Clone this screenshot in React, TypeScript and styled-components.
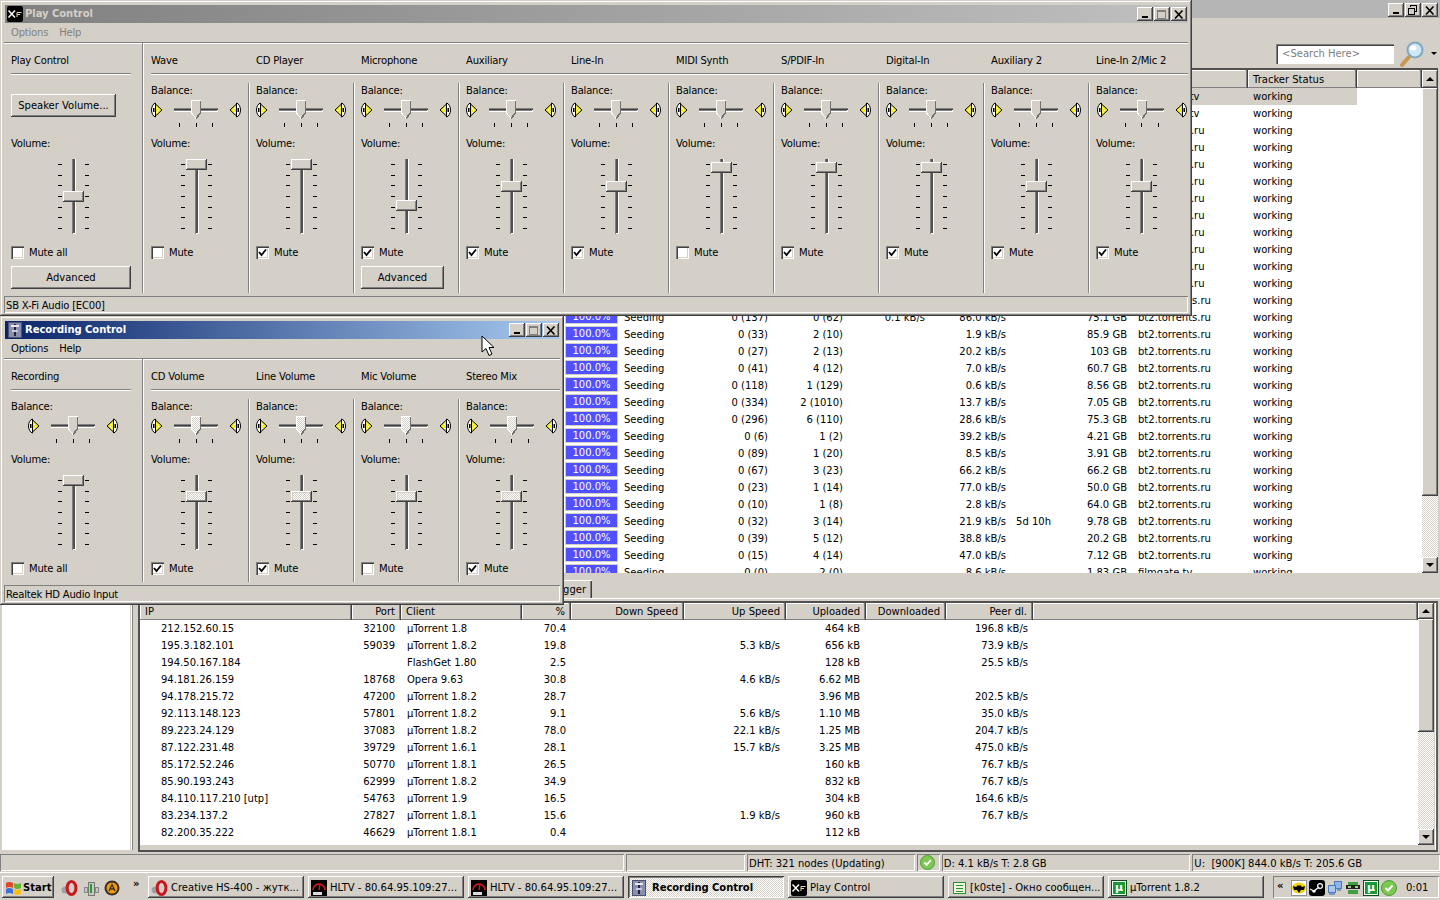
import React from "react";
import styled, { createGlobalStyle, css } from "styled-components";

const face = "#d4d0c8";

const GlobalStyle = createGlobalStyle`
  html, body {
    margin: 0;
    width: 1440px;
    height: 900px;
    overflow: hidden;
    background: ${face};
    color: #000;
    font-family: "DejaVu Sans", "Noto Sans", sans-serif;
    font-size: 10px;
    line-height: 14px;
  }
  * { box-sizing: border-box; }
`;

const raised = css`
  box-shadow: inset -1px -1px #404040, inset 1px 1px #fff, inset -2px -2px #808080;
`;
const sunken = css`
  box-shadow: inset 1px 1px #808080, inset -1px -1px #fff;
`;
const dither = css`
  background-color: ${face};
  background-image: repeating-conic-gradient(#fff 0 25%, ${face} 0 50%);
  background-size: 2px 2px;
`;

const Page = styled.div`
  width: 1440px;
  height: 900px;
  display: flex;
  flex-direction: column;
  overflow: hidden;
`;

const Desktop = styled.div`
  position: relative;
  height: 872px;
`;

/* uTorrent window behind the mixers */
const AppWindow = styled.div`
  height: 872px;
  display: flex;
  flex-direction: column;
`;

const AppTitle = styled.div`
  height: 18px;
  background: #b5b5b5;
  display: flex;
  justify-content: flex-end;
  padding: 3px 2px 0 0;
  gap: 1px;
`;

const Toolbar = styled.div`
  height: 50px;
  display: flex;
  align-items: flex-start;
  justify-content: flex-end;
  padding: 26px 3px 0 0;
`;

const SearchBox = styled.div`
  width: 118px;
  height: 20px;
  background: #fff;
  color: #808080;
  padding: 3px 6px;
  margin-right: 0;
  box-shadow: inset 1px 1px #808080, inset 2px 2px #404040, inset -1px -1px #fff;
`;

const SearchIcon = styled.svg`
  margin: -3px 0 0 5px;
`;

const DropArrow = styled.div`
  height: 0;
  margin: 8px 0 0 6px;
  border: 3px solid transparent;
  border-top: 3px solid #000;
  border-bottom: 0;
  width: 6px;
`;

const TorrentFrame = styled.div`
  height: 505px;
  margin: 0 2px;
  border-top: 2px solid #505050;
  display: flex;
`;

const ListMain = styled.div`
  flex: 1;
  min-width: 0;
  background: #fff;
  overflow: hidden;
`;

const torrentColumns = "562px 56px 80px 72px 75px 82px 81px 45px 76px 117px 109px";
const peerColumns = "212px 49px 121px 49px 113px 102px 80px 80px 87px";

const HeaderRow = styled.div<{ $columns: string; $height: number; $lineHeight: number }>`
  display: grid;
  grid-template-columns: ${(p) => p.$columns} 1fr;
  height: ${(p) => p.$height}px;
  line-height: ${(p) => p.$lineHeight}px;
  background: ${face};
`;

const HeaderCell = styled.div<{ $right?: boolean }>`
  padding: 0 5px;
  text-align: ${(p) => (p.$right ? "right" : "left")};
  box-shadow: inset -1px -1px #808080, inset -2px 0 ${face}, inset 1px 1px #fff;
  border-right: 1px solid #404040;
  white-space: nowrap;
  overflow: hidden;
`;

const TableRow = styled.div<{ $columns: string; $selected?: boolean }>`
  display: grid;
  grid-template-columns: ${(p) => p.$columns};
  width: max-content;
  height: 17px;
  line-height: 17px;
  background: ${(p) => (p.$selected ? face : "transparent")};
`;

const Cell = styled.div<{ $right?: boolean; $pad?: number }>`
  text-align: ${(p) => (p.$right ? "right" : "left")};
  padding: ${(p) => (p.$right ? `0 ${p.$pad ?? 4}px 0 0` : `0 0 0 ${p.$pad ?? 4}px`)};
  white-space: nowrap;
  overflow: hidden;
`;

const ProgressOuter = styled.div`
  width: 53px;
  height: 15px;
  margin-left: 1px;
  border: 1px solid ${face};
  background: #5050ff;
  color: #fff;
  line-height: 13px;
  text-align: center;
`;

const ScrollColumn = styled.div<{ $height?: number }>`
  width: 16px;
  display: flex;
  flex-direction: column;
  ${(p) => (p.$height ? `height: ${p.$height}px;` : "")}
  ${dither}
`;

const ScrollButton = styled.div<{ $height: number }>`
  height: ${(p) => p.$height}px;
  background: ${face};
  ${raised}
  display: flex;
  align-items: center;
  justify-content: center;
  flex: none;
`;

const ScrollThumb = styled.div<{ $height: number }>`
  height: ${(p) => p.$height}px;
  background: ${face};
  ${raised}
  flex: none;
`;

const ScrollGap = styled.div`
  flex: 1;
`;

const ArrowGlyph = styled.div<{ $up?: boolean }>`
  width: 0;
  height: 0;
  border-left: 4px solid transparent;
  border-right: 4px solid transparent;
  ${(p) => (p.$up ? "border-bottom: 4px solid #000;" : "border-top: 4px solid #000;")}
`;

const TabStrip = styled.div`
  height: 25px;
  width: 592px;
  padding-top: 7px;
  display: flex;
  justify-content: flex-end;
`;

const Tab = styled.div`
  height: 18px;
  padding: 3px 6px 0 6px;
  background: ${face};
  box-shadow: inset 1px 1px #fff, inset -1px 0 #404040, inset -2px 0 #808080;
`;

const LowerArea = styled.div`
  height: 255px;
  display: flex;
  border-top: 1px solid #fff;
`;

const SideList = styled.div`
  width: 128px;
  height: 251px;
  margin-left: 2px;
  background: #fff;
  box-shadow: 1px 0 ${face}, 2px 0 #fff, 3px 0 #808080;
`;

const PeerFrame = styled.div`
  width: 1300px;
  height: 251px;
  margin-left: 8px;
  margin-top: 2px;
  border: 2px solid #505050;
  border-right-color: #606060;
  display: flex;
  padding-right: 2px;
  background: ${face};
  box-shadow: inset -1px 0 #fff;
`;

const PeerMain = styled(ListMain)`
  height: 242px;
`;

const StatusBar = styled.div`
  height: 19px;
  padding-top: 1px;
  display: flex;
  gap: 2px;
`;

const StatusPanel = styled.div<{ $width: number }>`
  width: ${(p) => p.$width}px;
  height: 17px;
  padding: 3px 0 0 2px;
  white-space: pre;
  display: flex;
  justify-content: flex-start;
  ${sunken}
`;

const StatusIconPanel = styled(StatusPanel)`
  padding: 1px 0 0 3px;
`;

/* mixer windows */
const MixerShell = styled.div<{ $top: number; $width: number; $height: number; $z: number }>`
  position: absolute;
  left: 0;
  top: ${(p) => p.$top}px;
  z-index: ${(p) => p.$z};
  width: ${(p) => p.$width}px;
  height: ${(p) => p.$height}px;
  padding: 5px 4px 3px 4px;
  background: ${face};
  display: flex;
  flex-direction: column;
  letter-spacing: -0.2px;
  box-shadow: inset -1px -1px #404040, inset 1px 1px ${face}, inset -2px -2px #808080, inset 2px 2px #fff;
`;

const TitleBar = styled.div<{ $active: boolean }>`
  height: 18px;
  flex: none;
  margin-left: 1px;
  display: flex;
  align-items: center;
  padding: 0 1px 0 2px;
  color: ${(p) => (p.$active ? "#fff" : face)};
  font-weight: bold;
  letter-spacing: -0.05px;
  background: ${(p) =>
    p.$active
      ? "linear-gradient(90deg, #0a246a, #a6caf0)"
      : "linear-gradient(90deg, #808080, #c0c0c0)"};
`;

const TitleText = styled.span`
  margin-left: 2px;
  flex: 1;
`;

const CaptionButtons = styled.div`
  display: flex;
  gap: 1px;
`;

const CaptionButton = styled.div`
  width: 16px;
  height: 14px;
  background: ${face};
  display: flex;
  align-items: center;
  justify-content: center;
  ${raised}
`;

const MenuBar = styled.div`
  height: 19px;
  flex: none;
  display: flex;
  gap: 11px;
  padding: 3px 0 0 7px;
`;

const MenuItem = styled.span<{ $disabled: boolean }>`
  color: ${(p) => (p.$disabled ? "#808080" : "#000")};
`;

const MixerClient = styled.div`
  flex: 1;
  min-height: 0;
  display: flex;
  border-top: 1px solid #808080;
  box-shadow: inset 0 1px #fff;
`;

const Strip = styled.div<{ $master?: boolean }>`
  width: ${(p) => (p.$master ? 139 : 105)}px;
  flex: none;
  display: flex;
  flex-direction: column;
  ${(p) =>
    p.$master
      ? `border-right: 1px solid #808080; box-shadow: 1px 0 #fff; margin-right: 1px;`
      : ""}
  &:last-child { width: auto; flex: 1; min-width: 0; }
`;

const StripName = styled.div<{ $inset: string }>`
  height: 31px;
  flex: none;
  padding-top: 11px;
  margin: ${(p) => p.$inset};
  padding-left: ${(p) => (p.$inset === "0" ? "7px" : "0")};
  border-bottom: 1px solid #808080;
  box-shadow: 0 1px #fff;
  white-space: nowrap;
`;

const StripBody = styled.div<{ $divider: boolean }>`
  flex: 1;
  width: ${(p) => (p.$divider ? "100%" : "105px")};
  margin-top: 9px;
  display: flex;
  flex-direction: column;
  ${(p) => (p.$divider ? `border-right: 1px solid #808080; box-shadow: 1px 0 #fff;` : "")}
`;

const MasterBody = styled(StripBody)`
  width: 100%;
`;

const StripLabel = styled.div`
  height: 14px;
  line-height: 16px;
  padding-left: 7px;
`;

const VolumeLabel = styled(StripLabel)`
  margin-top: 14px;
`;

const BalanceSlot = styled.div`
  height: 39px;
  flex: none;
`;

const BalanceRow = styled.div`
  height: 28px;
  margin-top: 2px;
  display: flex;
  justify-content: center;
  gap: 11px;
`;

const Speaker = styled.svg<{ $flip?: boolean }>`
  margin-top: 3px;
  flex: none;
  ${(p) => (p.$flip ? "transform: scaleX(-1);" : "")}
`;

const BalanceTrack = styled.div`
  position: relative;
  width: 44px;
  height: 28px;
  &::before {
    content: "";
    position: absolute;
    left: 0;
    right: 0;
    top: 9px;
    height: 4px;
    background: #808080;
    box-shadow: inset 0 1px #808080, inset 0 2px #404040, inset 0 -1px #fff, inset -1px 0 #fff;
  }
`;

const BalanceThumb = styled.svg`
  position: absolute;
  left: 17px;
  top: 1px;
`;

const BalanceTicks = styled.div`
  position: absolute;
  left: 5px;
  right: 5px;
  bottom: 0;
  display: flex;
  justify-content: space-between;
`;

const BalanceTick = styled.i`
  display: block;
  width: 1px;
  height: 4px;
  background: #000;
`;

const VolumeRow = styled.div`
  height: 75px;
  margin-top: 9px;
  flex: none;
  display: flex;
  justify-content: center;
`;

const TickColumn = styled.div`
  width: 4px;
  padding: 5px 0;
  display: flex;
  flex-direction: column;
  justify-content: space-between;
  align-items: center;
`;

const VolumeTick = styled.i`
  display: block;
  width: 4px;
  height: 1px;
  background: #000;
`;

const VolumeTrack = styled.div`
  position: relative;
  width: 21px;
  margin: 0 1px;
  &::before {
    content: "";
    position: absolute;
    left: 9px;
    top: 0;
    bottom: 0;
    width: 4px;
    background: #505050;
    box-shadow: inset 1px 0 #808080, inset -1px 0 #fff, inset 0 -1px #fff;
  }
`;

const VolumeThumb = styled.div<{ $dither: boolean; $top: number }>`
  position: absolute;
  left: 0;
  top: ${(p) => p.$top}px;
  width: 21px;
  height: 11px;
  background: ${face};
  ${(p) => (p.$dither ? dither : "")}
  box-shadow: inset -1px -1px #404040, inset 1px 1px #fff, inset -2px -2px #808080, inset 2px 2px ${face};
`;

const MuteRow = styled.label`
  height: 13px;
  margin: 12px 0 0 7px;
  flex: none;
  display: flex;
  align-items: center;
  gap: 5px;
`;

const CheckBox = styled.div`
  width: 13px;
  height: 13px;
  background: #fff;
  box-shadow: inset 1px 1px #808080, inset 2px 2px #404040, inset -1px -1px #fff, inset -2px -2px ${face};
  display: flex;
  align-items: center;
  justify-content: center;
`;

const PushButton = styled.button<{ $width: number; $height: number; $top: number }>`
  width: ${(p) => p.$width}px;
  height: ${(p) => p.$height}px;
  margin: ${(p) => p.$top}px 0 0 7px;
  padding: 0;
  border: 0;
  background: ${face};
  font: inherit;
  color: #000;
  ${raised}
`;

const MixerStatus = styled.div`
  height: 17px;
  margin-top: 3px;
  flex: none;
  padding: 3px 0 0 2px;
  ${sunken}
`;

const Cursor = styled.svg`
  position: absolute;
  left: 481px;
  top: 335px;
  z-index: 5;
`;

/* taskbar */
const Taskbar = styled.div`
  height: 28px;
  padding: 4px 2px 0 2px;
  display: flex;
  box-shadow: inset 0 1px #fff;
`;

const StartButton = styled.div`
  width: 52px;
  height: 22px;
  flex: none;
  font-weight: bold;
  display: flex;
  align-items: center;
  gap: 1px;
  padding: 1px 0 0 3px;
  ${raised}
`;

const QuickLaunch = styled.div`
  width: 94px;
  flex: none;
  display: flex;
  align-items: center;
  gap: 5px;
  padding-left: 7px;
`;

const Chevron = styled.span`
  font-weight: bold;
  line-height: 10px;
  margin: -8px 0 0 8px;
`;

const TaskButtons = styled.div`
  display: flex;
  gap: 4px;
`;

const TaskButton = styled.div<{ $active?: boolean }>`
  width: 156px;
  height: 22px;
  display: flex;
  align-items: center;
  gap: ${(p) => (p.$active ? 5 : 3)}px;
  padding: 1px 0 0 3px;
  white-space: nowrap;
  overflow: hidden;
  ${(p) =>
    p.$active
      ? css`
          ${dither}
          font-weight: bold;
          letter-spacing: -0.05px;
          box-shadow: inset 1px 1px #404040, inset -1px -1px #fff, inset 2px 2px #808080;
        `
      : raised}
`;

const Tray = styled.div`
  width: 166px;
  height: 22px;
  margin-left: 9px;
  flex: none;
  display: flex;
  align-items: center;
  gap: 2px;
  padding: 1px 0 0 4px;
  ${sunken}
`;

const TrayChevron = styled.span`
  width: 12px;
  font-weight: bold;
  line-height: 10px;
  margin-top: -3px;
`;

const Clock = styled.span`
  margin-left: 7px;
`;

const TaskIcon = styled.svg`
  flex: none;
`;

/* icons */
const MinGlyph = () => (
  <svg width="8" height="8" shapeRendering="crispEdges">
    <rect x="1" y="6" width="6" height="2" fill="#000" />
  </svg>
);

const MaxGlyph = ({ disabled }: { disabled?: boolean }) => (
  <svg width="10" height="9" shapeRendering="crispEdges">
    <path d="M0.5 1.5H8.5V8.5H0.5ZM0 0.5H9" fill="none" stroke={disabled ? "#808080" : "#000"} />
  </svg>
);

const RestoreGlyph = () => (
  <svg width="10" height="10" shapeRendering="crispEdges">
    <path d="M2.5 2V0.5H8.5V6.5H7M0.5 3.5H6.5V9.5H0.5Z" fill="none" stroke="#000" />
  </svg>
);

const CloseGlyph = () => (
  <svg width="10" height="9">
    <path d="M1 0.5L8.5 8.5M8.5 0.5L1 8.5" stroke="#000" strokeWidth="1.6" />
  </svg>
);

const XFiIcon = () => (
  <TaskIcon width="16" height="16">
    <rect width="16" height="16" rx="2" fill="#000" />
    <path d="M1.5 4.5L8 11.5M8 4.5L1.5 11.5" stroke="#fff" strokeWidth="1.4" />
    <path d="M10 11V6.5H14.5M10 8.5H13" stroke="#ddd8b0" strokeWidth="1" fill="none" />
  </TaskIcon>
);

const MixerIcon = () => (
  <TaskIcon width="16" height="16" shapeRendering="crispEdges">
    <rect x="1.5" y="0.5" width="13" height="15" fill="#8a8fb0" stroke="#4a5070" />
    <rect x="7" y="2" width="2" height="12" fill="#223" />
    <rect x="4" y="3" width="8" height="2" fill="#e8e8f0" />
    <rect x="5" y="8" width="6" height="2" fill="#c8cce0" />
  </TaskIcon>
);

const OperaIcon = () => (
  <TaskIcon width="17" height="16">
    <ellipse cx="4.5" cy="10" rx="4" ry="3.5" fill="#a0a0a0" />
    <ellipse cx="10.5" cy="8" rx="4.4" ry="6.4" fill="none" stroke="#c8171d" strokeWidth="3" />
  </TaskIcon>
);

const HltvIcon = () => (
  <TaskIcon width="16" height="16">
    <rect width="16" height="16" fill="#000" />
    <path d="M2 10A6 6 0 0 1 14 10" stroke="#e01818" strokeWidth="1.6" fill="none" />
    <path d="M8 10L9 4" stroke="#e01818" strokeWidth="1.4" />
    <rect x="2" y="12" width="9" height="3" fill="#ddd" />
  </TaskIcon>
);

const ChatIcon = () => (
  <TaskIcon width="16" height="16" shapeRendering="crispEdges">
    <rect x="2.5" y="2.5" width="12" height="11" fill="#e8f8d8" stroke="#2a9030" />
    <path d="M5 5.5H12M5 8H12M5 11H12" stroke="#2a9030" />
  </TaskIcon>
);

const UTorrentBadge = styled.span`
  width: 16px;
  height: 16px;
  flex: none;
  background: #169a36;
  border: 1px solid #0a4f1c;
  box-shadow: inset 0 0 0 1px #fff;
  color: #fff;
  font-weight: bold;
  font-size: 11px;
  line-height: 13px;
  text-align: center;
`;

const WindowsFlag = () => (
  <TaskIcon width="17" height="16">
    <path d="M1 3Q4 1 8 3V8Q4 6 1 8Z" fill="#e2452a" />
    <path d="M9 3Q12 5 16 3V8Q12 10 9 8Z" fill="#63b531" />
    <path d="M1 9Q4 7 8 9V14Q4 12 1 14Z" fill="#3f6fd8" />
    <path d="M9 9Q12 11 16 9V14Q12 16 9 14Z" fill="#f5c01e" />
  </TaskIcon>
);

const BatteryIcon = () => (
  <TaskIcon width="16" height="16" shapeRendering="crispEdges">
    <rect x="5" y="2" width="6" height="13" fill="#c8c8c0" stroke="#777" />
    <rect x="7" y="4" width="2" height="9" fill="#20a030" />
    <rect x="1" y="7" width="3" height="5" fill="#c8c8c0" stroke="#888" />
    <rect x="12" y="7" width="3" height="5" fill="#c8c8c0" stroke="#888" />
  </TaskIcon>
);

const AimpIcon = () => (
  <TaskIcon width="16" height="16">
    <circle cx="8" cy="8" r="7.5" fill="#3a3020" />
    <circle cx="8" cy="8" r="5.5" fill="#f09a10" />
    <path d="M5 11L8 4.5L11 11M6.2 9H9.8" stroke="#3a3020" strokeWidth="1.3" fill="none" />
  </TaskIcon>
);

const BatmanIcon = () => (
  <TaskIcon width="16" height="16">
    <rect width="16" height="16" fill="#fff" />
    <rect x="0.5" y="0.5" width="15" height="15" fill="none" stroke="#223" strokeDasharray="1 1" />
    <ellipse cx="8" cy="8" rx="7" ry="5.5" fill="#f2d21a" />
    <path d="M2 6L5 7L7 5L8 6L9 5L11 7L14 6L13 10L10 10L8 13L6 10L3 10Z" fill="#000" />
  </TaskIcon>
);

const SteamIcon = () => (
  <TaskIcon width="16" height="16">
    <rect width="16" height="16" rx="3" fill="#000" />
    <circle cx="11" cy="6" r="2.4" fill="none" stroke="#fff" strokeWidth="1.2" />
    <circle cx="5" cy="11" r="1.8" fill="#fff" />
    <path d="M1 9L5 11L10 7" stroke="#fff" strokeWidth="1.2" />
  </TaskIcon>
);

const NetworkIcon = () => (
  <TaskIcon width="16" height="16" shapeRendering="crispEdges">
    <rect x="7.5" y="1.5" width="7" height="7" fill="#8fb4ea" stroke="#5078b8" />
    <rect x="1.5" y="5.5" width="7" height="7" fill="#a8c8f4" stroke="#5078b8" />
    <rect x="2" y="13" width="6" height="2" fill="#7a98c8" />
    <rect x="10" y="9" width="4" height="2" fill="#7a98c8" />
  </TaskIcon>
);

const RobotIcon = () => (
  <TaskIcon width="16" height="16" shapeRendering="crispEdges">
    <rect x="3" y="2" width="10" height="3" fill="#40a040" />
    <rect x="1" y="5" width="14" height="4" fill="#222" />
    <rect x="3" y="6" width="3" height="2" fill="#9fd08f" />
    <rect x="10" y="6" width="3" height="2" fill="#9fd08f" />
    <rect x="3" y="10" width="10" height="4" fill="#40a040" />
  </TaskIcon>
);

const OkBubble = ({ size }: { size: number }) => (
  <TaskIcon width={size} height={size} viewBox="0 0 16 16">
    <circle cx="8" cy="8" r="7.5" fill="#7cc850" stroke="#4c9a30" />
    <path d="M4.5 8L7 10.5L11.5 5.5" stroke="#fff" strokeWidth="2" fill="none" />
  </TaskIcon>
);

const Magnifier = () => (
  <SearchIcon width="26" height="26">
    <path d="M3 24L10 16" stroke="#c89850" strokeWidth="4" strokeLinecap="round" />
    <circle cx="16" cy="9" r="7.5" fill="#cfe6f4" stroke="#7fa8c0" strokeWidth="2" />
    <ellipse cx="14" cy="7" rx="3.5" ry="2.5" fill="#fff" />
  </SearchIcon>
);

const SpeakerGlyph = ({ flip }: { flip?: boolean }) => (
  <Speaker width="12" height="16" $flip={flip}>
    <path d="M4.5 1C2 1.5 0.5 5 0.5 8S2 14.5 4.5 15Z" fill="#fff" stroke="#000" />
    <rect x="2" y="6" width="1.5" height="4" fill="#000" />
    <path d="M4.5 2L11 8L4.5 14Z" fill="#f6ee20" stroke="#000" strokeWidth="1" />
    <rect x="6" y="6" width="1" height="1" fill="#fff" />
    <rect x="7" y="8" width="1" height="1" fill="#fff" />
    <rect x="6" y="10" width="1" height="1" fill="#fff" />
  </Speaker>
);

const BalancePointer = ({ dithered }: { dithered: boolean }) => (
  <BalanceThumb width="11" height="20" shapeRendering="crispEdges">
    <defs>
      <pattern id="thumbDither" width="2" height="2" patternUnits="userSpaceOnUse">
        <rect width="2" height="2" fill={face} />
        <rect width="1" height="1" fill="#fff" />
        <rect x="1" y="1" width="1" height="1" fill="#fff" />
      </pattern>
    </defs>
    <path d="M0 0H10V13L5 19L0 13Z" fill={dithered ? "url(#thumbDither)" : face} />
    <path d="M0.5 13V0.5H9.5" fill="none" stroke="#fff" />
    <path d="M9.5 0.5V13L5 18.5" fill="none" stroke="#707070" strokeWidth="1.6" />
    <path d="M0.5 13L5 18.5" fill="none" stroke="#fff" />
  </BalanceThumb>
);

const CheckMark = () => (
  <svg width="9" height="9">
    <path d="M1 4L3.5 7L8 1.5" stroke="#000" strokeWidth="1.8" fill="none" />
  </svg>
);

const tickRows = [0, 1, 2, 3, 4, 5, 6];

const VolumeSlider = ({ top, dithered }: { top: number; dithered: boolean }) => (
  <VolumeRow>
    <TickColumn>
      {tickRows.map((t) => (
        <VolumeTick key={t} />
      ))}
    </TickColumn>
    <VolumeTrack>
      <VolumeThumb $top={top} $dither={dithered} />
    </VolumeTrack>
    <TickColumn>
      {tickRows.map((t) => (
        <VolumeTick key={t} />
      ))}
    </TickColumn>
  </VolumeRow>
);

const BalanceSlider = ({ dithered }: { dithered: boolean }) => (
  <BalanceRow>
    <SpeakerGlyph />
    <BalanceTrack>
      <BalancePointer dithered={dithered} />
      <BalanceTicks>
        <BalanceTick />
        <BalanceTick />
        <BalanceTick />
      </BalanceTicks>
    </BalanceTrack>
    <SpeakerGlyph flip />
  </BalanceRow>
);

interface ChannelInfo {
  name: string;
  volume: number;
  muted?: boolean;
  advanced?: boolean;
}

const MasterStrip = ({
  name,
  volume,
  speakerButton,
  advanced,
}: ChannelInfo & { speakerButton?: boolean }) => (
  <Strip $master>
    <StripName $inset="0 11px 0 7px">{name}</StripName>
    <MasterBody $divider={false}>
      {speakerButton ? (
        <BalanceSlot>
          <PushButton $width={105} $height={23} $top={11}>
            Speaker Volume...
          </PushButton>
        </BalanceSlot>
      ) : (
        <BalanceSlot>
          <StripLabel>Balance:</StripLabel>
          <BalanceSlider dithered={false} />
        </BalanceSlot>
      )}
      <VolumeLabel>Volume:</VolumeLabel>
      <VolumeSlider top={volume} dithered={false} />
      <MuteRow>
        <CheckBox />
        Mute all
      </MuteRow>
      {advanced && (
        <PushButton $width={120} $height={23} $top={7}>
          Advanced
        </PushButton>
      )}
    </MasterBody>
  </Strip>
);

const ChannelStrip = ({
  channel,
  first,
  last,
  dithered,
}: {
  channel: ChannelInfo;
  first: boolean;
  last: boolean;
  dithered: boolean;
}) => (
  <Strip>
    <StripName $inset={first ? "0 0 0 7px" : "0"}>{channel.name}</StripName>
    <StripBody $divider={!last}>
      <BalanceSlot>
        <StripLabel>Balance:</StripLabel>
        <BalanceSlider dithered={dithered} />
      </BalanceSlot>
      <VolumeLabel>Volume:</VolumeLabel>
      <VolumeSlider top={channel.volume} dithered={dithered} />
      <MuteRow>
        <CheckBox>{channel.muted && <CheckMark />}</CheckBox>
        Mute
      </MuteRow>
      {channel.advanced && (
        <PushButton $width={83} $height={23} $top={7}>
          Advanced
        </PushButton>
      )}
    </StripBody>
  </Strip>
);

interface MixerProps {
  title: string;
  icon: React.ReactNode;
  active: boolean;
  top: number;
  width: number;
  height: number;
  z: number;
  device: string;
  master: ChannelInfo;
  speakerButton?: boolean;
  channels: ChannelInfo[];
}

const MixerWindow = (props: MixerProps) => (
  <MixerShell $top={props.top} $width={props.width} $height={props.height} $z={props.z}>
    <TitleBar $active={props.active}>
      {props.icon}
      <TitleText>{props.title}</TitleText>
      <CaptionButtons>
        <CaptionButton>
          <MinGlyph />
        </CaptionButton>
        <CaptionButton>
          <MaxGlyph disabled />
        </CaptionButton>
        <CaptionButton>
          <CloseGlyph />
        </CaptionButton>
      </CaptionButtons>
    </TitleBar>
    <MenuBar>
      <MenuItem $disabled={!props.active}>Options</MenuItem>
      <MenuItem $disabled={!props.active}>Help</MenuItem>
    </MenuBar>
    <MixerClient>
      <MasterStrip {...props.master} speakerButton={props.speakerButton} />
      {props.channels.map((c, i) => (
        <ChannelStrip
          key={c.name}
          channel={c}
          first={i === 0}
          last={i === props.channels.length - 1}
          dithered={props.active}
        />
      ))}
    </MixerClient>
    <MixerStatus>{props.device}</MixerStatus>
  </MixerShell>
);

const playChannels: ChannelInfo[] = [
  { name: "Wave", volume: 0 },
  { name: "CD Player", volume: 0, muted: true },
  { name: "Microphone", volume: 41, muted: true, advanced: true },
  { name: "Auxiliary", volume: 22, muted: true },
  { name: "Line-In", volume: 22, muted: true },
  { name: "MIDI Synth", volume: 3 },
  { name: "S/PDIF-In", volume: 3, muted: true },
  { name: "Digital-In", volume: 3, muted: true },
  { name: "Auxiliary 2", volume: 22, muted: true },
  { name: "Line-In 2/Mic 2", volume: 22, muted: true },
];

const recordChannels: ChannelInfo[] = [
  { name: "CD Volume", volume: 16, muted: true },
  { name: "Line Volume", volume: 16, muted: true },
  { name: "Mic Volume", volume: 16 },
  { name: "Stereo Mix", volume: 16, muted: true },
];

// seeds, peers, down, up, eta, size, tracker
type TorrentRow = [string, string, string, string, string, string, string];

// rows lying under the Play Control window only show their tail end
const coveredRows = (tracker: string, count: number): TorrentRow[] =>
  Array.from({ length: count }, () => ["", "", "", "", "", "", tracker]);

const torrents: TorrentRow[] = [
  ...coveredRows("t.filmgate.tv", 2),
  ...coveredRows("bt.torrents.ru", 10),
  ...coveredRows("bt2.torrents.ru", 1),
  ["0 (137)", "0 (62)", "0.1 kB/s", "86.0 kB/s", "", "75.1 GB", "bt2.torrents.ru"],
  ["0 (33)", "2 (10)", "", "1.9 kB/s", "", "85.9 GB", "bt2.torrents.ru"],
  ["0 (27)", "2 (13)", "", "20.2 kB/s", "", "103 GB", "bt2.torrents.ru"],
  ["0 (41)", "4 (12)", "", "7.0 kB/s", "", "60.7 GB", "bt2.torrents.ru"],
  ["0 (118)", "1 (129)", "", "0.6 kB/s", "", "8.56 GB", "bt2.torrents.ru"],
  ["0 (334)", "2 (1010)", "", "13.7 kB/s", "", "7.05 GB", "bt2.torrents.ru"],
  ["0 (296)", "6 (110)", "", "28.6 kB/s", "", "75.3 GB", "bt2.torrents.ru"],
  ["0 (6)", "1 (2)", "", "39.2 kB/s", "", "4.21 GB", "bt2.torrents.ru"],
  ["0 (89)", "1 (20)", "", "8.5 kB/s", "", "3.91 GB", "bt2.torrents.ru"],
  ["0 (67)", "3 (23)", "", "66.2 kB/s", "", "66.2 GB", "bt2.torrents.ru"],
  ["0 (23)", "1 (14)", "", "77.0 kB/s", "", "50.0 GB", "bt2.torrents.ru"],
  ["0 (10)", "1 (8)", "", "2.8 kB/s", "", "64.0 GB", "bt2.torrents.ru"],
  ["0 (32)", "3 (14)", "", "21.9 kB/s", "5d 10h", "9.78 GB", "bt2.torrents.ru"],
  ["0 (39)", "5 (12)", "", "38.8 kB/s", "", "20.2 GB", "bt2.torrents.ru"],
  ["0 (15)", "4 (14)", "", "47.0 kB/s", "", "7.12 GB", "bt2.torrents.ru"],
  ["0 (0)", "2 (0)", "", "8.6 kB/s", "", "1.83 GB", "filmgate.tv"],
];

// ip, port, client, percent, up, uploaded, peer dl
const peers: string[][] = [
  ["212.152.60.15", "32100", "µTorrent 1.8", "70.4", "", "464 kB", "196.8 kB/s"],
  ["195.3.182.101", "59039", "µTorrent 1.8.2", "19.8", "5.3 kB/s", "656 kB", "73.9 kB/s"],
  ["194.50.167.184", "", "FlashGet 1.80", "2.5", "", "128 kB", "25.5 kB/s"],
  ["94.181.26.159", "18768", "Opera 9.63", "30.8", "4.6 kB/s", "6.62 MB", ""],
  ["94.178.215.72", "47200", "µTorrent 1.8.2", "28.7", "", "3.96 MB", "202.5 kB/s"],
  ["92.113.148.123", "57801", "µTorrent 1.8.2", "9.1", "5.6 kB/s", "1.10 MB", "35.0 kB/s"],
  ["89.223.24.129", "37083", "µTorrent 1.8.2", "78.0", "22.1 kB/s", "1.25 MB", "204.7 kB/s"],
  ["87.122.231.48", "39729", "µTorrent 1.6.1", "28.1", "15.7 kB/s", "3.25 MB", "475.0 kB/s"],
  ["85.172.52.246", "50770", "µTorrent 1.8.1", "26.5", "", "160 kB", "76.7 kB/s"],
  ["85.90.193.243", "62999", "µTorrent 1.8.2", "34.9", "", "832 kB", "76.7 kB/s"],
  ["84.110.117.210 [utp]", "54763", "µTorrent 1.9", "16.5", "", "304 kB", "164.6 kB/s"],
  ["83.234.137.2", "27827", "µTorrent 1.8.1", "15.6", "1.9 kB/s", "960 kB", "76.7 kB/s"],
  ["82.200.35.222", "46629", "µTorrent 1.8.1", "0.4", "", "112 kB", ""],
  ["81.201.255.20", "40879", "µTorrent 1.8.2", "0.4", "", "96 kB", "28.3 kB/s"],
];

const torrentHeaders = ["", "", "", "", "", "", "", "", "", "", "Tracker Status"];
const peerHeaders: [string, boolean][] = [
  ["IP", false],
  ["Port", true],
  ["Client", false],
  ["%", true],
  ["Down Speed", true],
  ["Up Speed", true],
  ["Uploaded", true],
  ["Downloaded", true],
  ["Peer dl.", true],
];

const Scrollbar = ({ thumb, upHeight, height }: { thumb: number; upHeight: number; height?: number }) => (
  <ScrollColumn $height={height}>
    <ScrollButton $height={upHeight}>
      <ArrowGlyph $up />
    </ScrollButton>
    <ScrollThumb $height={thumb} />
    <ScrollGap />
    <ScrollButton $height={16}>
      <ArrowGlyph />
    </ScrollButton>
  </ScrollColumn>
);

const AppBackground = () => (
  <AppWindow>
    <AppTitle>
      <CaptionButton>
        <MinGlyph />
      </CaptionButton>
      <CaptionButton>
        <RestoreGlyph />
      </CaptionButton>
      <CaptionButton>
        <CloseGlyph />
      </CaptionButton>
    </AppTitle>
    <Toolbar>
      <SearchBox>&lt;Search Here&gt;</SearchBox>
      <Magnifier />
      <DropArrow />
    </Toolbar>
    <TorrentFrame>
      <ListMain>
        <HeaderRow $columns={torrentColumns} $height={18} $lineHeight={20}>
          {torrentHeaders.map((h, i) => (
            <HeaderCell key={i}>{h}</HeaderCell>
          ))}
          <HeaderCell />
        </HeaderRow>
        {torrents.map((t, i) => (
          <TableRow key={i} $columns={torrentColumns} $selected={i === 0}>
            <Cell />
            <Cell $pad={0}>{t[0] && <ProgressOuter>100.0%</ProgressOuter>}</Cell>
            <Cell>{t[0] && "Seeding"}</Cell>
            <Cell $right>{t[0]}</Cell>
            <Cell $right>{t[1]}</Cell>
            <Cell $right>{t[2]}</Cell>
            <Cell $right>{t[3]}</Cell>
            <Cell $right>{t[4]}</Cell>
            <Cell $right>{t[5]}</Cell>
            <Cell $pad={7}>{t[6]}</Cell>
            <Cell $pad={5}>working</Cell>
          </TableRow>
        ))}
      </ListMain>
      <Scrollbar thumb={408} upHeight={18} />
    </TorrentFrame>
    <TabStrip>
      <Tab>Logger</Tab>
    </TabStrip>
    <LowerArea>
      <SideList />
      <PeerFrame>
        <PeerMain>
          <HeaderRow $columns={peerColumns} $height={17} $lineHeight={17}>
            {peerHeaders.map(([h, right]) => (
              <HeaderCell key={h} $right={right}>
                {h}
              </HeaderCell>
            ))}
            <HeaderCell />
          </HeaderRow>
          {peers.map((p) => (
            <TableRow key={p[0]} $columns={peerColumns}>
              <Cell $pad={21}>{p[0]}</Cell>
              <Cell $right $pad={6}>{p[1]}</Cell>
              <Cell $pad={6}>{p[2]}</Cell>
              <Cell $right $pad={5}>{p[3]}</Cell>
              <Cell />
              <Cell $right $pad={6}>{p[4]}</Cell>
              <Cell $right $pad={6}>{p[5]}</Cell>
              <Cell />
              <Cell $right $pad={5}>{p[6]}</Cell>
            </TableRow>
          ))}
        </PeerMain>
        <Scrollbar thumb={113} upHeight={16} height={242} />
      </PeerFrame>
    </LowerArea>
    <StatusBar>
      <StatusPanel $width={625} />
      <StatusPanel $width={119} />
      <StatusPanel $width={168}>DHT: 321 nodes (Updating)</StatusPanel>
      <StatusIconPanel $width={23}>
        <OkBubble size={15} />
      </StatusIconPanel>
      <StatusPanel $width={249}>D: 4.1 kB/s T: 2.8 GB</StatusPanel>
      <StatusPanel $width={248}>U:  [900K] 844.0 kB/s T: 205.6 GB</StatusPanel>
    </StatusBar>
  </AppWindow>
);

export default function App() {
  return (
    <Page>
      <GlobalStyle />
      <Desktop>
        <AppBackground />
        <MixerWindow
          title="Play Control"
          icon={<XFiIcon />}
          active={false}
          top={0}
          width={1192}
          height={316}
          z={2}
          device="SB X-Fi Audio [EC00]"
          master={{ name: "Play Control", volume: 32, advanced: true }}
          speakerButton
          channels={playChannels}
        />
        <MixerWindow
          title="Recording Control"
          icon={<MixerIcon />}
          active
          top={316}
          width={564}
          height={289}
          z={3}
          device="Realtek HD Audio Input"
          master={{ name: "Recording", volume: 0 }}
          channels={recordChannels}
        />
        <Cursor width="15" height="22">
          <path d="M1 1V17L5 13.5L8 20.5L11 19L8 12.5H13Z" fill="#fff" stroke="#000" />
        </Cursor>
      </Desktop>
      <Taskbar>
        <StartButton>
          <WindowsFlag />
          Start
        </StartButton>
        <QuickLaunch>
          <OperaIcon />
          <BatteryIcon />
          <AimpIcon />
          <Chevron>»</Chevron>
        </QuickLaunch>
        <TaskButtons>
          <TaskButton>
            <OperaIcon />
            Creative HS-400 - жутк...
          </TaskButton>
          <TaskButton>
            <HltvIcon />
            HLTV - 80.64.95.109:27...
          </TaskButton>
          <TaskButton>
            <HltvIcon />
            HLTV - 80.64.95.109:27...
          </TaskButton>
          <TaskButton $active>
            <MixerIcon />
            Recording Control
          </TaskButton>
          <TaskButton>
            <XFiIcon />
            Play Control
          </TaskButton>
          <TaskButton>
            <ChatIcon />
            [k0ste] - Окно сообщен...
          </TaskButton>
          <TaskButton>
            <UTorrentBadge>µ</UTorrentBadge>
            µTorrent 1.8.2
          </TaskButton>
        </TaskButtons>
        <Tray>
          <TrayChevron>«</TrayChevron>
          <BatmanIcon />
          <SteamIcon />
          <NetworkIcon />
          <RobotIcon />
          <UTorrentBadge>µ</UTorrentBadge>
          <OkBubble size={16} />
          <Clock>0:01</Clock>
        </Tray>
      </Taskbar>
    </Page>
  );
}
